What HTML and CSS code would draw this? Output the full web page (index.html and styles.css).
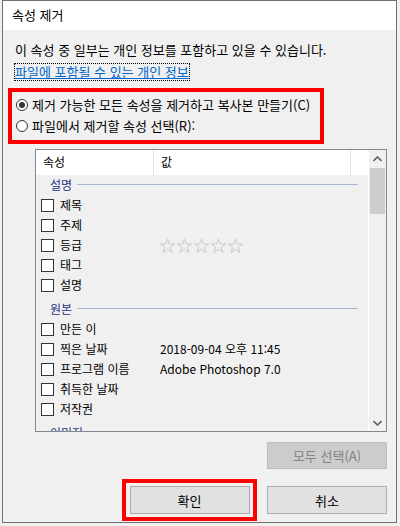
FILE: index.html
```html
<!DOCTYPE html>
<html lang="ko">
<head>
    <meta charset="UTF-8">
    <title>속성 제거</title>
    <link rel="stylesheet" href="styles.css">
</head>
<body>
    <div class="dialog">
        <div class="titlebar">속성 제거</div>

        <div class="content">
            <p class="intro">이 속성 중 일부는 개인 정보를 포함하고 있을 수 있습니다.</p>
            <a href="#" class="info-link">파일에 포함될 수 있는 개인 정보</a>

            <div class="choice highlight">
                <label class="radio-row">
                    <span class="radio checked"></span>
                    제거 가능한 모든 속성을 제거하고 복사본 만들기(C)
                </label>
                <label class="radio-row">
                    <span class="radio"></span>
                    파일에서 제거할 속성 선택(R):
                </label>
            </div>

            <div class="listbox">
                <div class="list-main">
                    <div class="list-head">
                        <div class="col-name">속성</div>
                        <div class="col-value">값</div>
                        <div class="col-rest"></div>
                    </div>

                    <div class="list-rows">
                        <div class="group first"><span>설명</span></div>
                        <div class="row"><span class="check"></span><span class="name">제목</span><span class="value"></span></div>
                        <div class="row"><span class="check"></span><span class="name">주제</span><span class="value"></span></div>
                        <div class="row">
                            <span class="check"></span><span class="name">등급</span>
                            <span class="value stars">
                                <svg width="86" height="16" viewBox="0 0 86 16">
                                    <g fill="none" stroke="#c9c9c9" stroke-width="1">
                                        <polygon points="7.5,1 9.3,6 14.5,6 10.3,9.2 11.9,14.4 7.5,11.2 3.1,14.4 4.7,9.2 0.5,6 5.7,6"/>
                                        <polygon transform="translate(17 0)" points="7.5,1 9.3,6 14.5,6 10.3,9.2 11.9,14.4 7.5,11.2 3.1,14.4 4.7,9.2 0.5,6 5.7,6"/>
                                        <polygon transform="translate(34 0)" points="7.5,1 9.3,6 14.5,6 10.3,9.2 11.9,14.4 7.5,11.2 3.1,14.4 4.7,9.2 0.5,6 5.7,6"/>
                                        <polygon transform="translate(51 0)" points="7.5,1 9.3,6 14.5,6 10.3,9.2 11.9,14.4 7.5,11.2 3.1,14.4 4.7,9.2 0.5,6 5.7,6"/>
                                        <polygon transform="translate(68 0)" points="7.5,1 9.3,6 14.5,6 10.3,9.2 11.9,14.4 7.5,11.2 3.1,14.4 4.7,9.2 0.5,6 5.7,6"/>
                                    </g>
                                </svg>
                            </span>
                        </div>
                        <div class="row"><span class="check"></span><span class="name">태그</span><span class="value"></span></div>
                        <div class="row"><span class="check"></span><span class="name">설명</span><span class="value"></span></div>

                        <div class="group"><span>원본</span></div>
                        <div class="row"><span class="check"></span><span class="name">만든 이</span><span class="value"></span></div>
                        <div class="row"><span class="check"></span><span class="name">찍은 날짜</span><span class="value">2018-09-04 오후 11:45</span></div>
                        <div class="row"><span class="check"></span><span class="name">프로그램 이름</span><span class="value">Adobe Photoshop 7.0</span></div>
                        <div class="row"><span class="check"></span><span class="name">취득한 날짜</span><span class="value"></span></div>
                        <div class="row"><span class="check"></span><span class="name">저작권</span><span class="value"></span></div>

                        <div class="group"><span>이미지</span></div>
                    </div>
                </div>

                <div class="scrollbar">
                    <div class="scroll-btn">
                        <svg width="9" height="6" viewBox="0 0 9 6"><polyline points="0.5,5 4.5,1 8.5,5" fill="none" stroke="#606060" stroke-width="1.6"/></svg>
                    </div>
                    <div class="scroll-track"><div class="scroll-thumb"></div></div>
                    <div class="scroll-btn">
                        <svg width="9" height="6" viewBox="0 0 9 6"><polyline points="0.5,1 4.5,5 8.5,1" fill="none" stroke="#606060" stroke-width="1.6"/></svg>
                    </div>
                </div>
            </div>

            <div class="select-all">
                <button class="btn" disabled>모두 선택(A)</button>
            </div>

            <div class="footer">
                <div class="highlight ok-wrap">
                    <button class="btn">확인</button>
                </div>
                <button class="btn">취소</button>
            </div>
        </div>
    </div>
</body>
</html>
```

FILE: styles.css
```css
/* 속성 제거 대화 상자 */
:root {
    --face: #f0f0f0;
    --border: #707070;
    --list-border: #828790;
    --link: #0066cc;
    --group: #1e3287;
    --group-line: #a9b6dc;
    --mark: #ff0000;
}

* {
    margin: 0;
    padding: 0;
    box-sizing: border-box;
    font-family: "Noto Sans CJK KR", "Noto Sans", sans-serif;
}

body {
    background-color: var(--face);
    color: #000;
    font-size: 13px;
    line-height: 16px;
}

.dialog {
    margin-left: 2px;
    width: 395px;
    height: 523px;
    border: 1px solid var(--border);
    background-color: var(--face);
    display: flex;
    flex-direction: column;
}

.titlebar {
    height: 29px;
    background-color: #fff;
    padding-left: 9px;
    line-height: 28px;
}

.content {
    flex: 1;
    padding-top: 12px;
}

.intro {
    margin-left: 12px;
}

.info-link {
    display: inline-block;
    margin: 6px 0 0 12px;
    color: var(--link);
    outline: 1px dotted #000;
}

.highlight {
    border: 4px solid var(--mark);
}

.choice {
    margin: 8px 0 0 5px;
    width: 316px;
    height: 56px;
    padding: 2px 0 0 4px;
}

.radio-row {
    display: flex;
    align-items: center;
    gap: 4px;
    height: 21px;
}

.radio {
    width: 12px;
    height: 12px;
    border: 1px solid #333;
    border-radius: 50%;
    background-color: #fff;
    display: flex;
    align-items: center;
    justify-content: center;
}

.radio.checked::after {
    content: "";
    width: 6px;
    height: 6px;
    border-radius: 50%;
    background-color: #333;
}

.listbox {
    margin: 5px 0 0 32px;
    width: 352px;
    height: 283px;
    border: 1px solid var(--list-border);
    display: flex;
    overflow: hidden;
    font-size: 12px;
}

.list-main {
    width: 333px;
    border-right: 1px solid #fff;
    overflow: hidden;
}

.list-head {
    display: flex;
    height: 25px;
    background-color: #fff;
    line-height: 24px;
}

.col-name {
    width: 118px;
    padding-left: 7px;
    border-right: 1px solid #e5e5e5;
}

.col-value {
    width: 197px;
    padding-left: 7px;
    border-right: 1px solid #e5e5e5;
}

.col-rest {
    flex: 1;
}

.group {
    display: flex;
    align-items: center;
    gap: 5px;
    height: 20px;
    margin-top: 4px;
    padding: 0 10px 0 14px;
    color: var(--group);
}

.group.first {
    margin-top: 0;
}

.group::after {
    content: "";
    flex: 1;
    height: 1px;
    margin-top: -1px;
    background-color: var(--group-line);
}

.row {
    display: flex;
    align-items: center;
    height: 20px;
    padding-left: 5px;
}

.check {
    width: 13px;
    height: 13px;
    border: 1px solid #333;
    background-color: #fff;
}

.name {
    width: 100px;
    margin-left: 6px;
}

.value {
    flex: 1;
}

.stars svg {
    display: block;
    margin-top: 1px;
}

.scrollbar {
    flex: 1;
    display: flex;
    flex-direction: column;
}

.scroll-btn {
    height: 17px;
    display: flex;
    align-items: center;
    justify-content: center;
}

.scroll-track {
    flex: 1;
    padding: 1px 1px 0 1px;
}

.scroll-thumb {
    height: 46px;
    background-color: #cdcdcd;
}

.select-all {
    display: flex;
    justify-content: flex-end;
    margin: 10px 9px 0 0;
}

.btn {
    width: 120px;
    height: 28px;
    border: 1px solid #adadad;
    background-color: #e1e1e1;
    font-size: 13px;
    color: #000;
}

.btn:disabled {
    height: 27px;
    border-color: #bfbfbf;
    background-color: #cccccc;
    color: #838383;
}

.footer {
    display: flex;
    justify-content: flex-end;
    align-items: center;
    gap: 10px;
    margin: 10px 9px 0 0;
}

.ok-wrap {
    width: 135px;
    height: 42px;
    display: flex;
    align-items: center;
    justify-content: center;
}
```
